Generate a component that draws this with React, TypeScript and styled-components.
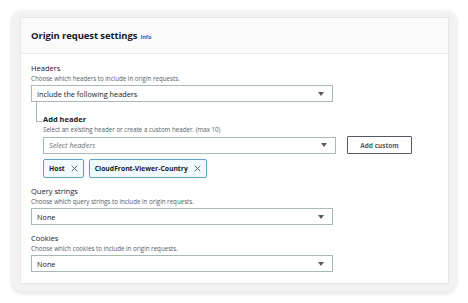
import styled, { createGlobalStyle } from 'styled-components';

const GlobalStyle = createGlobalStyle`
  body {
    margin: 0;
    background: #ffffff;
    font-family: "Open Sans", "Liberation Sans", sans-serif;
    color: #16191f;
  }
`

const Frame = styled.div`
  margin: 11px 12px;
  width: 444px;
  height: 281px;
  box-sizing: border-box;
  padding: 6px 7px 8px 8px;
  border-radius: 11px;
  background: #f2f2f2;
  box-shadow: 0 1px 5px rgba(0, 0, 0, 0.14);
`

const Panel = styled.div`
  height: 100%;
  box-sizing: border-box;
  background: #fff;
  border: 1px solid #e6e8e8;
  display: flex;
  flex-direction: column;
`

const PanelHeader = styled.div`
  height: 35px;
  flex-shrink: 0;
  display: flex;
  align-items: center;
  padding-left: 10px;
  background: #fafafa;
  border-bottom: 1px solid #eaeded;
`

const Title = styled.h2`
  margin: 0;
  font-size: 9.5px;
  font-weight: 700;
  letter-spacing: -0.1px;
`

const InfoLink = styled.span`
  margin-left: 3px;
  font-size: 5.5px;
  font-weight: 700;
  color: #0073bb;
  position: relative;
  top: 1px;
`

const Body = styled.div`
  padding: 9px 10px 0 10px;
  display: flex;
  flex-direction: column;
`

const Field = styled.div<{ $top?: number }>`
  display: flex;
  flex-direction: column;
  margin-top: ${p => p.$top ?? 0}px;
`

const Label = styled.div<{ $bold?: boolean }>`
  font-size: 7.5px;
  line-height: 11px;
  font-weight: ${p => (p.$bold ? 700 : 400)};
`

const Desc = styled.div`
  font-size: 6.2px;
  line-height: 9px;
  color: #545b64;
  margin-bottom: 2px;
`

const SelectBox = styled.div<{ $width: number; $placeholder?: boolean }>`
  width: ${p => p.$width}px;
  height: 17px;
  box-sizing: border-box;
  border: 1px solid #aab7b8;
  display: flex;
  align-items: center;
  justify-content: space-between;
  padding: 0 8px 0 5px;
  font-size: 7.3px;
  font-style: ${p => (p.$placeholder ? 'italic' : 'normal')};
  color: ${p => (p.$placeholder ? '#687078' : '#16191f')};
`

const Caret = styled.span`
  width: 0;
  height: 0;
  border-left: 3px solid transparent;
  border-right: 3px solid transparent;
  border-top: 4px solid #545b64;
`

const SubSection = styled.div`
  display: flex;
  margin-left: 5px;
`

const TreeLine = styled.div`
  width: 5px;
  height: 19px;
  flex-shrink: 0;
  border-left: 1px solid #aab7b8;
  border-bottom: 1px solid #aab7b8;
  margin-right: 2px;
`

const SubContent = styled.div`
  display: flex;
  flex-direction: column;
  padding-top: 12px;
  margin-left: -1px;
`

const Row = styled.div`
  display: flex;
  align-items: center;
  gap: 11px;
`

const Button = styled.div`
  width: 65px;
  height: 18px;
  box-sizing: border-box;
  border: 1px solid #545b64;
  border-radius: 1px;
  display: flex;
  align-items: center;
  justify-content: center;
  font-size: 6.5px;
  font-weight: 700;
  color: #545b64;
`

const Tokens = styled.div`
  display: flex;
  gap: 5px;
  margin-top: 5px;
`

const Token = styled.div`
  height: 19px;
  box-sizing: border-box;
  display: flex;
  align-items: center;
  gap: 6px;
  padding: 0 5px;
  background: #f1faff;
  border: 1px solid #5ba4c7;
  border-radius: 2px;
  font-size: 6.8px;
  font-weight: 700;
`

function CloseIcon() {
  return (
    <svg width="7" height="7" viewBox="0 0 10 10">
      <path d="M1 1 L9 9 M9 1 L1 9" stroke="#545b64" strokeWidth="1.3" />
    </svg>
  );
}

export default function App() {
  return (
    <>
      <GlobalStyle />
      <Frame>
        <Panel>
          <PanelHeader>
            <Title>Origin request settings</Title>
            <InfoLink>Info</InfoLink>
          </PanelHeader>
          <Body>
            <Field>
              <Label>Headers</Label>
              <Desc>Choose which headers to include in origin requests.</Desc>
              <SelectBox $width={302}>
                Include the following headers
                <Caret />
              </SelectBox>
            </Field>
            <SubSection>
              <TreeLine />
              <SubContent>
                <Label $bold>Add header</Label>
                <Desc>Select an existing header or create a custom header. (max 10)</Desc>
                <Row>
                  <SelectBox $width={293} $placeholder>
                    Select headers
                    <Caret />
                  </SelectBox>
                  <Button>Add custom</Button>
                </Row>
                <Tokens>
                  <Token>Host <CloseIcon /></Token>
                  <Token>CloudFront-Viewer-Country <CloseIcon /></Token>
                </Tokens>
              </SubContent>
            </SubSection>
            <Field $top={8}>
              <Label>Query strings</Label>
              <Desc>Choose which query strings to include in origin requests.</Desc>
              <SelectBox $width={302}>
                None
                <Caret />
              </SelectBox>
            </Field>
            <Field $top={8}>
              <Label>Cookies</Label>
              <Desc>Choose which cookies to include in origin requests.</Desc>
              <SelectBox $width={302}>
                None
                <Caret />
              </SelectBox>
            </Field>
          </Body>
        </Panel>
      </Frame>
    </>
  );
}
